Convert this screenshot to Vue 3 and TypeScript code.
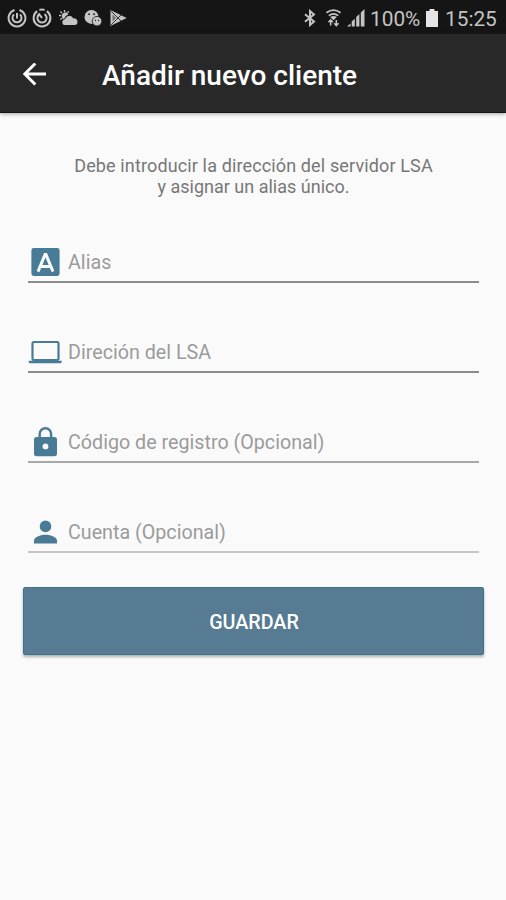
<script setup lang="ts">
type IconName = 'alias' | 'laptop' | 'lock' | 'person'

interface Field {
  icon: IconName
  label: string
  tone: 'dark' | 'mid' | 'light'
}

const fields: Field[] = [
  { icon: 'alias', label: 'Alias', tone: 'dark' },
  { icon: 'laptop', label: 'Direción del LSA', tone: 'dark' },
  { icon: 'lock', label: 'Código de registro (Opcional)', tone: 'mid' },
  { icon: 'person', label: 'Cuenta (Opcional)', tone: 'light' },
]
</script>

<template>
  <div class="screen">
    <div class="status">
      <div class="notices">
        <svg class="glyph" viewBox="0 0 20 20">
          <path d="M7.5 2A8.4 8.4 0 1 0 12.5 2M7 6.5A4.5 4.5 0 1 0 13 6.5M10 5V10.5" fill="none" stroke="currentColor" stroke-width="2" />
        </svg>
        <svg class="glyph" viewBox="0 0 20 20">
          <path d="M5.2 3.1A8.4 8.4 0 1 0 14.8 3.1M7.3 1.9Q10 1.1 12.7 1.9M7.1 6.4A4.6 4.6 0 1 0 12.5 6.1M10 10L6.5 5.4" fill="none" stroke="currentColor" stroke-width="2" />
        </svg>
        <svg class="glyph" viewBox="0 0 20 20">
          <path d="M6.5 2V4M1 7.5H3M2.4 3.6L3.9 5M10.7 3.4L9.5 4.8M2.3 11.5L3.8 10.3" stroke="currentColor" stroke-width="1.4" />
          <path d="M4 9A3.3 3.3 0 0 1 10.3 6.6Q7.2 7.4 6.4 10.6L4.5 11Z" fill="currentColor" />
          <path d="M6 17A3.2 3.2 0 0 1 7.2 11A4.3 4.3 0 0 1 15.3 10.5A3.3 3.3 0 0 1 19.5 14Q19.5 17 16.8 17Z" fill="currentColor" />
        </svg>
        <svg class="glyph" viewBox="0 0 20 20">
          <circle cx="8.5" cy="8.9" r="7" fill="currentColor" />
          <path d="M6 6.2h.1M11 6.2h.1" stroke="#151515" stroke-width="1.7" stroke-linecap="round" />
          <circle cx="14" cy="13.2" r="4.8" fill="currentColor" stroke="#151515" stroke-width=".8" />
          <path d="M12.4 12.4h.1M15.6 12.4h.1" stroke="#151515" stroke-width="1.1" stroke-linecap="round" />
        </svg>
        <svg class="glyph" viewBox="0 0 20 20">
          <path d="M2.5 2L18.7 10L2.5 18Z" fill="currentColor" />
          <path d="M3 3L14.5 14.5M3 17L14.5 5.5" stroke="#222" stroke-width=".9" />
          <path d="M4.5 6.5V13.5L8 10Z" fill="#707070" />
        </svg>
      </div>
      <div class="system">
        <svg class="bluetooth" viewBox="0 0 14 18">
          <path d="M2 5.2L11 12.6L7 16V2L11 5.4L2 12.8" fill="none" stroke="currentColor" stroke-width="2" />
        </svg>
        <svg class="wifi" viewBox="0 0 18 20">
          <path d="M1.5 4.5Q9-1 16.5 4.5M4 7.5Q9 3.8 14 7.5" fill="none" stroke="currentColor" stroke-width="1.8" />
          <path d="M5.5 9Q9 6.5 12.5 9L9 12.5Z" fill="currentColor" />
          <path d="M6 18V12.5M3.7 14.5L6 12L8.3 14.5M12 12V17.5M9.7 15.5L12 18L14.3 15.5" fill="none" stroke="currentColor" stroke-width="1.6" />
        </svg>
        <svg class="signal" viewBox="0 0 18 18">
          <path d="M0 17.5L3.5 14.5V17.5ZM4.7 17.5V12.5L7.8 9.8V17.5ZM9.2 17.5V8L12.4 5V17.5ZM13.8 17.5V3.5L17.5 0V17.5Z" fill="currentColor" />
        </svg>
        <span class="percent">100%</span>
        <svg class="battery" viewBox="0 0 12 18">
          <path d="M3.5 0H8.5V2H12V18H0V2H3.5Z" fill="currentColor" />
        </svg>
        <span class="clock">15:25</span>
      </div>
    </div>

    <header class="appbar">
      <svg class="back" viewBox="0 0 24 24">
        <path d="M23 11H2M12.3 .5L1.8 11L12.3 21.5" fill="none" stroke="currentColor" stroke-width="3" />
      </svg>
      <h1 class="title">Añadir nuevo cliente</h1>
    </header>

    <main class="content">
      <p class="hint"><span class="hint-first">Debe introducir la dirección del servidor LSA</span><br />y asignar un alias único.</p>

      <div class="form">
        <div v-for="field in fields" :key="field.label" class="field" :class="field.tone">
          <svg class="icon" viewBox="0 0 34 34">
            <template v-if="field.icon === 'alias'">
              <rect x="3.4" y="3" width="28.2" height="28" rx="2.4" fill="currentColor" />
              <path d="M10 26.6L17 9.6H18L25 26.6M12.4 21.4H22.6" fill="none" stroke="#fafafa" stroke-width="3" />
            </template>
            <template v-else-if="field.icon === 'laptop'">
              <rect x="4.5" y="7" width="26" height="18" rx="1.4" fill="none" stroke="currentColor" stroke-width="2.2" />
              <path d="M.7 25.7H33.7V27.2Q33.7 28.3 32 28.3H2.4Q.7 28.3 .7 27.2Z" fill="currentColor" />
            </template>
            <template v-else-if="field.icon === 'lock'">
              <path d="M11.7 13V9A5.7 5.7 0 0 1 23.1 9V13" fill="none" stroke="currentColor" stroke-width="2.4" />
              <rect x="6" y="12" width="23" height="19.2" rx="2.6" fill="currentColor" />
              <circle cx="17.5" cy="21.4" r="2.9" fill="#fafafa" />
            </template>
            <template v-else>
              <circle cx="17.5" cy="11.4" r="5.8" fill="currentColor" />
              <path d="M6 28.5V25.6C6 21.7 13.7 19.8 17.5 19.8S29 21.7 29 25.6V28.5Z" fill="currentColor" />
            </template>
          </svg>
          <span class="label">{{ field.label }}</span>
        </div>
      </div>

      <button class="save" type="button">GUARDAR</button>
    </main>
  </div>
</template>

<style>
body {
  background: #fafafa;
}
</style>

<style scoped>
.screen {
  min-height: 900px;
  background: #fafafa;
  font-family: Roboto, "Liberation Sans", sans-serif;
}

svg {
  display: block;
  flex: none;
}

.status {
  display: flex;
  justify-content: space-between;
  box-sizing: border-box;
  height: 34px;
  padding: 0 8px 0 7px;
  background: #151515;
  color: #c4c4c4;
}

.notices,
.system {
  display: flex;
  align-items: center;
  padding-top: 2px;
}

.notices {
  gap: 5.3px;
}

.glyph {
  width: 20px;
  height: 20px;
}

.system {
  font-size: 20.8px;
}

.bluetooth {
  width: 14px;
  height: 18px;
  margin-right: 8px;
}

.wifi {
  width: 17px;
  height: 20px;
  margin-right: 5px;
}

.signal {
  width: 18px;
  height: 18px;
  margin-right: 5px;
}

.percent {
  width: 52px;
  padding-top: 2px;
  white-space: nowrap;
  margin-right: 4px;
}

.battery {
  width: 12px;
  height: 18px;
  margin-right: 7px;
  color: #e4e4e4;
}

.clock {
  width: 53px;
  padding-top: 2px;
  white-space: nowrap;
}

.appbar {
  position: relative;
  display: flex;
  align-items: center;
  box-sizing: border-box;
  height: 79px;
  padding: 3px 23px 0;
  background: #282828;
  border-bottom: 1px solid #151515;
  box-shadow: 0 1px 4px rgba(0, 0, 0, 0.35);
  color: #fff;
}

.back {
  width: 24px;
  height: 24px;
}

.title {
  margin: 2px 0 0 55px;
  font-size: 28px;
  font-weight: 500;
  line-height: 36px;
  white-space: nowrap;
}

.content {
  display: flex;
  flex-direction: column;
  padding: 42px 22px 0 23px;
}

.hint {
  margin: 0;
  color: #777;
  font-size: 18px;
  line-height: 21px;
  text-align: center;
}

.hint-first {
  letter-spacing: 0.13px;
}

.form {
  display: flex;
  flex-direction: column;
  gap: 42px;
  margin: 38px 5px 0;
}

.field {
  display: flex;
  align-items: center;
  gap: 6px;
  box-sizing: border-box;
  height: 48px;
  padding-top: 8px;
  border-bottom: 2px solid #8c8c8c;
}

.field.mid {
  border-color: #a8a8a8;
}

.field.light {
  border-color: #c6c6c6;
}

.icon {
  width: 34px;
  height: 34px;
  color: #477b96;
}

.label {
  padding-top: 2px;
  color: #9b9b9b;
  font-size: 19.7px;
  line-height: 24px;
  white-space: nowrap;
}

.save {
  height: 68px;
  margin: 34px 0 0;
  padding: 2px 0 0 1px;
  border: 1px solid #3b748d;
  border-radius: 2px;
  background: #567b93;
  box-shadow: 0 2px 3px rgba(0, 0, 0, 0.3);
  color: #fff;
  font-family: inherit;
  font-size: 19.7px;
  font-weight: 500;
}
</style>
